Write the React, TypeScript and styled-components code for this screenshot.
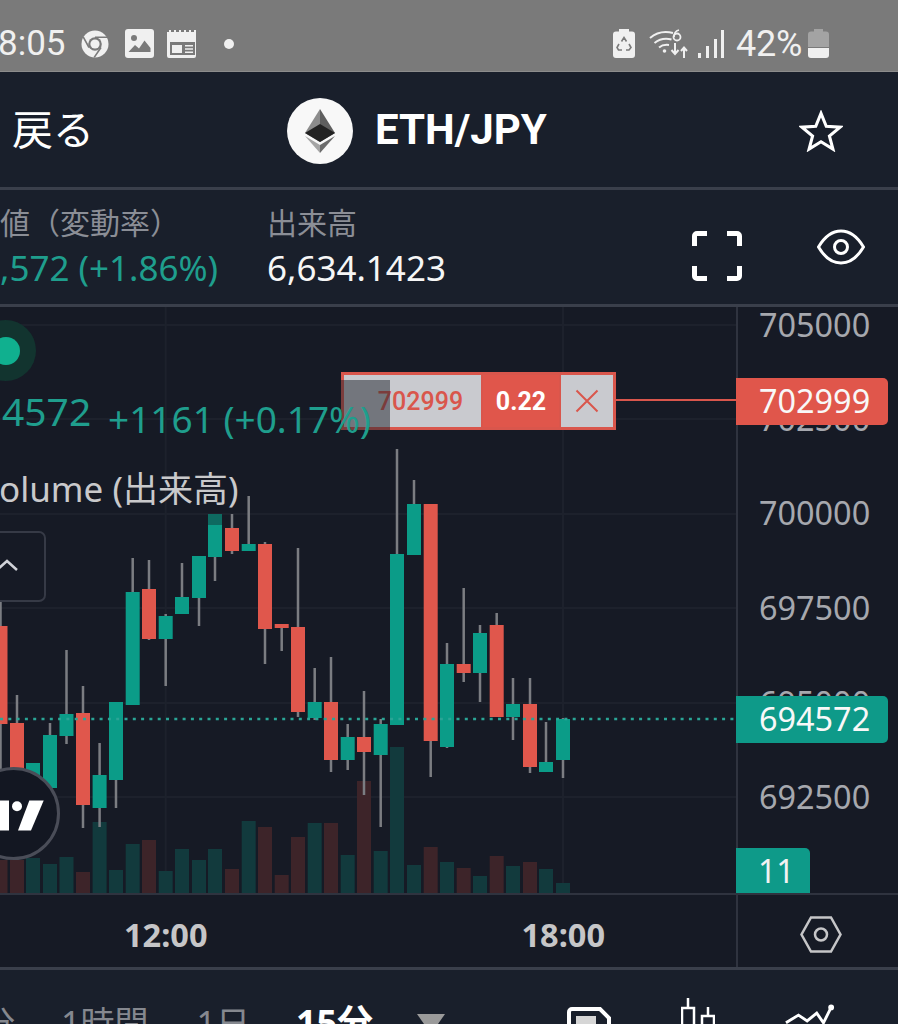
import styled, { createGlobalStyle } from "styled-components";

const GlobalStyle = createGlobalStyle`
  html, body {
    margin: 0;
    padding: 0;
    background: #191f2b;
  }
  * {
    box-sizing: border-box;
  }
`;

const Screen = styled.div`
  width: 898px;
  height: 1024px;
  overflow: hidden;
  display: flex;
  flex-direction: column;
  font-family: "Noto Sans", "Noto Sans CJK JP", sans-serif;
  color: #fff;
  background: #191f2b;
`;

const StatusBar = styled.div`
  height: 72px;
  flex: none;
  display: flex;
  align-items: center;
  background: #7a7a7a;
  border-bottom: 1px solid #8c8c8c;
  color: #f0f0f0;
  font-family: Roboto, sans-serif;
  font-size: 35px;
  padding-top: 16px;
`;

const Clock = styled.span`
  margin-left: -2px;
  width: 83px;
  flex: none;
`;

const StatusIcon = styled.svg<{ $gap: number }>`
  flex: none;
  margin-right: ${(p) => p.$gap}px;
  color: #f0f0f0;
`;

const NoticeDot = styled.div`
  width: 10px;
  height: 10px;
  flex: none;
  margin-left: 26px;
  border-radius: 50%;
  background: #f0f0f0;
`;

const Battery = styled.span`
  font-size: 36px;
  margin-right: 6px;
  letter-spacing: -0.3px;
`;

const Spacer = styled.div`
  flex: 1;
`;

const Header = styled.header`
  height: 118px;
  flex: none;
  position: relative;
  display: flex;
  align-items: center;
  padding: 0 55px 0 12px;
  border-bottom: 3px solid #3a3f4b;
`;

const BackLink = styled.div`
  font-size: 41px;
  width: 275px;
  line-height: 1;
`;

const Coin = styled.div`
  width: 66px;
  height: 66px;
  flex: none;
  border-radius: 50%;
  background: #f8f8f8;
  display: flex;
  align-items: center;
  justify-content: center;
  margin-top: 2px;
`;

const Pair = styled.div`
  font-family: Roboto, sans-serif;
  font-size: 42px;
  font-weight: 700;
  margin-left: 22px;
`;

const StarIcon = styled.svg`
  margin-top: 2px;
`;

const InfoRow = styled.div`
  height: 117px;
  flex: none;
  display: flex;
  border-bottom: 3px solid #3a3f4b;
  padding: 13px 33px 0 0;
`;

const Stat = styled.div<{ $width: number }>`
  width: ${(p) => p.$width}px;
  flex: none;
  white-space: nowrap;
`;

const StatLabel = styled.div`
  font-size: 30px;
  line-height: 40px;
  color: #8b8e96;
`;

const StatValue = styled.div<{ $up?: boolean }>`
  font-size: 35px;
  line-height: 46px;
  margin-top: 2px;
  color: ${(p) => (p.$up ? "#1f9e8d" : "#f6f6f6")};
`;

const InfoIcons = styled.div`
  display: flex;
  align-items: flex-start;
  gap: 75px;
  margin-left: auto;
  padding-top: 28px;
`;

const EyeIcon = styled.svg`
  margin-top: -2px;
`;

const ChartRow = styled.div`
  height: 588px;
  flex: none;
  display: flex;
  background: #161a25;
  border-bottom: 2px solid #2f333f;
`;

const Plot = styled.div`
  width: 736px;
  flex: none;
  position: relative;
  overflow: hidden;
`;

const ChartSvg = styled.svg`
  display: block;
  width: 737px;
  height: 586px;
`;

const Legend = styled.div`
  position: absolute;
  top: 13px;
  left: 0;
  z-index: 3;
  white-space: nowrap;
`;

const StatusHalo = styled.div`
  width: 61px;
  height: 61px;
  margin-left: -25px;
  border-radius: 50%;
  background: #12342f;
  display: flex;
  align-items: center;
  justify-content: center;
`;

const StatusDot = styled.div`
  width: 28px;
  height: 28px;
  border-radius: 50%;
  background: #10b08f;
`;

const LegendValues = styled.div`
  display: flex;
  align-items: flex-start;
  margin-top: 4px;
  color: #1f9e8d;
`;

const LastValue = styled.span`
  font-size: 39px;
  line-height: 52px;
  width: 108px;
  padding-left: 2px;
`;

const ChangeValue = styled.span`
  font-size: 37px;
  line-height: 46px;
  margin-top: 11px;
`;

const StudyName = styled.div`
  font-size: 35px;
  line-height: 46px;
  color: #c9c9cb;
  margin-top: 24px;
  margin-left: -1px;
`;

const Collapse = styled.div`
  width: 66px;
  height: 71px;
  margin: 19px 0 0 -20px;
  border: 2px solid #363a46;
  border-radius: 7px;
  background: #161a25;
  display: flex;
  align-items: center;
  justify-content: center;
  padding: 0 0 4px 0;
`;

const ChevronIcon = styled.svg`
  margin-left: -12px;
`;

const OrderLine = styled.div`
  position: absolute;
  top: 65px;
  left: 341px;
  right: 0;
  display: flex;
  align-items: center;
  z-index: 2;
  &::after {
    content: "";
    flex: 1;
    height: 2px;
    margin-bottom: 3px;
    background: #d9564c;
  }
`;

const OrderBox = styled.div`
  width: 275px;
  height: 58px;
  flex: none;
  position: relative;
  display: flex;
  gap: 2px;
  padding: 3px;
  background: #d9564c;
  font-family: Roboto, sans-serif;
  font-size: 25px;
  font-weight: 500;
`;

const OrderCell = styled.div<{ $width: number; $tone: "light" | "solid" }>`
  width: ${(p) => p.$width}px;
  flex: none;
  display: flex;
  align-items: center;
  justify-content: center;
  background: ${(p) => (p.$tone === "light" ? "#c9cacf" : "#e0564b")};
  color: ${(p) => (p.$tone === "light" ? "#d9564c" : "#fff")};
  font-weight: ${(p) => (p.$tone === "light" ? 500 : 700)};
`;

const PriceText = styled.span`
  padding-left: 16px;
`;

const OrderShade = styled.div`
  position: absolute;
  left: 0;
  top: 8px;
  bottom: 0;
  width: 49px;
  background: rgba(30, 33, 44, 0.5);
`;

const LogoBadge = styled.div`
  position: absolute;
  left: -33px;
  top: 460px;
  width: 93px;
  height: 93px;
  z-index: 3;
  border-radius: 50%;
  border: 3px solid #4a4d58;
  background: #131722;
  display: flex;
  align-items: center;
  justify-content: center;
`;

const PriceAxis = styled.div`
  width: 162px;
  flex: none;
  position: relative;
  border-left: 2px solid #2f333f;
`;

const PriceTick = styled.div<{ $top: number }>`
  position: absolute;
  top: ${(p) => p.$top}px;
  left: 21px;
  font-size: 32.4px;
  line-height: 36px;
  color: #a6a8ae;
`;

const PriceTag = styled.div<{ $top: number; $bg: string }>`
  position: absolute;
  top: ${(p) => p.$top}px;
  left: -2px;
  width: 152px;
  height: 47px;
  padding: 0 0 3px 23px;
  display: flex;
  align-items: center;
  font-size: 32.4px;
  color: #f8f8f8;
  background: ${(p) => p.$bg};
  border-radius: 0 5px 5px 0;
`;

const VolumeTag = styled.div`
  position: absolute;
  bottom: 0;
  left: -2px;
  width: 74px;
  height: 45px;
  padding-left: 22px;
  display: flex;
  align-items: center;
  font-size: 32px;
  color: #f2f2f2;
  background: #0e9a89;
  border-radius: 0 5px 0 0;
`;

const TimeRow = styled.div`
  height: 75px;
  flex: none;
  display: flex;
  background: #161a25;
  border-bottom: 3px solid #3a3f4b;
`;

const TimeAxis = styled.div`
  width: 736px;
  flex: none;
  display: flex;
  align-items: center;
  gap: 314px;
  padding: 6px 0 0 124px;
  font-size: 32.5px;
  font-weight: 700;
  color: #c6c6c8;
`;

const AxisSettings = styled.div`
  flex: 1;
  display: flex;
  align-items: center;
  justify-content: center;
  padding: 6px 0 0 6px;
  border-left: 2px solid #2f333f;
`;

const Toolbar = styled.div`
  flex: 1;
  min-height: 0;
  overflow: hidden;
  display: flex;
  align-items: flex-start;
  font-size: 34px;
  color: #85888f;
  white-space: nowrap;
`;

const Interval = styled.span<{ $left: number; $active?: boolean }>`
  margin-left: ${(p) => p.$left}px;
  line-height: 46px;
  margin-top: 30px;
  flex: none;
  font-size: ${(p) => (p.$active ? 36 : 34)}px;
  font-weight: ${(p) => (p.$active ? 700 : 400)};
  color: ${(p) => (p.$active ? "#fff" : "#85888f")};
`;

const Caret = styled.div`
  width: 0;
  height: 0;
  flex: none;
  margin: 44px 0 0 44px;
  border-left: 14px solid transparent;
  border-right: 14px solid transparent;
  border-top: 20px solid #9a9a9a;
`;

const ToolIcon = styled.svg<{ $left: number; $top: number }>`
  flex: none;
  margin-left: ${(p) => p.$left}px;
  margin-top: ${(p) => p.$top}px;
`;

type Candle = [number, number, number, number, number, 0 | 1, number];

// x, body top, body bottom, wick top, wick bottom, rising, volume top
const candles: Candle[] = [
  [0.5, 626, 724, 590, 770, 0, 860],
  [17, 723, 772, 695, 772, 0, 860],
  [33, 763, 790, 763, 790, 1, 858],
  [50, 735, 788, 723, 788, 1, 864],
  [66.5, 714, 736, 650, 744, 1, 857],
  [83, 713, 805, 686, 828, 0, 872],
  [99.6, 775, 808, 743, 827, 1, 822],
  [116, 702, 780, 702, 808, 1, 870],
  [132.7, 592, 705, 558, 705, 1, 844],
  [149, 589, 639, 560, 640, 0, 840],
  [165.7, 616, 639, 614, 686, 1, 871],
  [182, 597, 614, 563, 614, 1, 849],
  [199, 556, 598, 556, 626, 1, 860],
  [215, 514, 557, 514, 581, 1, 849],
  [232, 528, 551, 514, 554, 0, 869],
  [248.7, 544, 551, 496, 551, 1, 821],
  [265, 544, 629, 542, 664, 0, 827],
  [281.7, 624, 628, 624, 651, 0, 875],
  [298, 627, 712, 548, 717, 0, 837],
  [314.7, 702, 718, 668, 720, 1, 823],
  [331, 702, 760, 657, 772, 0, 823],
  [347.7, 737, 760, 724, 770, 1, 855],
  [364, 737, 752, 691, 795, 0, 781],
  [380.7, 724, 755, 719, 827, 1, 851],
  [397, 554, 725, 449, 725, 1, 747],
  [414, 504, 555, 480, 555, 1, 865],
  [430.7, 504, 741, 504, 777, 0, 847],
  [447, 664, 747, 643, 748, 1, 862],
  [463.7, 664, 673, 588, 682, 0, 868],
  [480, 633, 673, 625, 702, 1, 876],
  [496.7, 625, 717, 613, 717, 0, 856],
  [513, 704, 717, 678, 740, 1, 866],
  [530, 704, 767, 678, 773, 0, 862],
  [546, 762, 772, 722, 772, 1, 869],
  [563, 719, 760, 718, 778, 1, 883],
];

const gridRows = [325, 419, 514, 608, 703, 797];
const gridColumns = [165.7, 563];

function Chart() {
  return (
    <ChartSvg viewBox="0 307 737 586">
      {gridRows.map((y) => (
        <line key={y} x1="0" x2="737" y1={y} y2={y} stroke="#1d212c" strokeWidth="2" />
      ))}
      {gridColumns.map((x) => (
        <line key={x} x1={x} x2={x} y1="307" y2="893" stroke="#1d212c" strokeWidth="2" />
      ))}
      {candles.map(([x, , , , , up, vol]) => (
        <rect key={x} x={x - 7} y={vol} width="14" height={893 - vol} fill={up ? "#123a3d" : "#3d2429"} />
      ))}
      {candles.map(([x, top, bottom, wickTop, wickBottom, up]) => (
        <g key={x}>
          <rect x={x - 1.25} y={wickTop} width="2.5" height={wickBottom - wickTop} fill="#7b7d82" />
          <rect x={x - 7} y={top} width="14" height={bottom - top} fill={up ? "#0b9c88" : "#e0574c"} />
        </g>
      ))}
      <rect x="208" y="514" width="14" height="11" fill="#0e6a61" />
      <line x1="0" x2="737" y1="719" y2="719" stroke="#2aa596" strokeWidth="2.5" strokeDasharray="3 5.3" />
    </ChartSvg>
  );
}

export default function App() {
  return (
    <Screen>
      <GlobalStyle />
      <StatusBar>
        <Clock>8:05</Clock>
        <StatusIcon $gap={16} width="28" height="28" viewBox="0 0 28 28">
          <circle cx="14" cy="14" r="13.5" fill="currentColor" />
          <circle cx="14" cy="14" r="6.8" fill="#7a7a7a" />
          <circle cx="14" cy="14" r="4.6" fill="currentColor" />
          <path d="M14 7.2h12.4M8 17.5 2.2 6.8M20 17.5 13.2 27.4" stroke="#7a7a7a" strokeWidth="1.6" fill="none" />
        </StatusIcon>
        <StatusIcon $gap={13} width="29" height="29" viewBox="0 0 29 29">
          <rect width="29" height="29" rx="3" fill="currentColor" />
          <circle cx="9" cy="9" r="3" fill="#7a7a7a" />
          <path d="M3.5 23 10 16l4 3.5 5.5-8L25.5 19v4z" fill="#7a7a7a" />
        </StatusIcon>
        <StatusIcon $gap={0} width="31" height="28" viewBox="0 0 31 28">
          <path d="M0 2h2V0h2v2h3V0h2v2h3V0h2v2h3V0h2v2h3V0h2v2h3V0h2v26a2 2 0 0 1-2 2H2a2 2 0 0 1-2-2z" fill="currentColor" />
          <path d="M3 9h25v16H3z" fill="#7a7a7a" />
          <path d="M3 12h25V9H3zM5 15h10v8H5zM18 15h8v1.6h-8zM18 18.2h8v1.6h-8zM18 21.4h8V23h-8z" fill="currentColor" />
        </StatusIcon>
        <NoticeDot />
        <Spacer />
        <StatusIcon $gap={14} width="22" height="29" viewBox="0 0 22 29">
          <path d="M6 0h10v2.5h3a3 3 0 0 1 3 3V26a3 3 0 0 1-3 3H3a3 3 0 0 1-3-3V5.500a3 3 0 0 1 3-3h3z" fill="currentColor" />
          <path d="M8.500 12.500 11 8.500l2.500 4M16 15l2 3.500-2 2.500h-3M9 21H5.500L4 18.500 6 15" stroke="#7a7a7a" strokeWidth="1.6" fill="none" />
        </StatusIcon>
        <StatusIcon $gap={8} width="40" height="30" viewBox="0 0 40 30">
          <path d="M1 9C8 3 16 2 24 4M5.500 14c5-4 11-5 17-3.500M10 18.500c3-2.500 6-3 10-2.500" stroke="currentColor" strokeWidth="2" fill="none" />
          <circle cx="15.500" cy="22" r="1.800" fill="currentColor" />
          <path d="M26 24.500V14M22.500 21l3.500 4 3.500-4M35 29V19M32 22l3-3.500 3 3.500" stroke="currentColor" strokeWidth="2" fill="none" />
          <circle cx="28" cy="8" r="3.500" stroke="currentColor" strokeWidth="1.800" fill="none" />
          <path d="M25 8c0-3 1-6 5-7" stroke="currentColor" strokeWidth="1.800" fill="none" />
        </StatusIcon>
        <StatusIcon $gap={12} width="27" height="28" viewBox="0 0 27 28">
          <path d="M1 23h3v5H1zM9 16h3v12H9zM17 9h3v19h-3zM24 0h3v28h-3z" fill="currentColor" />
        </StatusIcon>
        <Battery>42%</Battery>
        <StatusIcon $gap={69} width="21" height="29" viewBox="0 0 21 29">
          <path d="M6 0h9v2.500h3a3 3 0 0 1 3 3V18H0V5.500a3 3 0 0 1 3-3h3z" fill="#a3a3a3" />
          <path d="M0 19h21v7a3 3 0 0 1-3 3H3a3 3 0 0 1-3-3z" fill="currentColor" />
        </StatusIcon>
      </StatusBar>

      <Header>
        <BackLink>戻る</BackLink>
        <Coin>
          <svg width="30" height="44" viewBox="0 0 30 44">
            <path d="M15 0 0 24l15 9z" fill="#8c8c8c" />
            <path d="M15 0 30 24l-15 9z" fill="#5f5f5f" />
            <path d="M15 15 0 24l15 9 15-9z" fill="#222" />
            <path d="M0 27l15 17V36z" fill="#a5a5a5" />
            <path d="M30 27 15 44V36z" fill="#6c6c6c" />
          </svg>
        </Coin>
        <Pair>ETH/JPY</Pair>
        <Spacer />
        <StarIcon width="44" height="42" viewBox="0 0 46 44">
          <path d="M23 3.500 28.500 17 43 18l-11.200 9.200L35.500 41 23 33.300 10.500 41l3.700-13.800L3 18l14.500-1z" fill="none" stroke="#fff" strokeWidth="3.200" />
        </StarIcon>
      </Header>

      <InfoRow>
        <Stat $width={267}>
          <StatLabel>値（変動率）</StatLabel>
          <StatValue $up>,572 (+1.86%)</StatValue>
        </Stat>
        <Stat $width={200}>
          <StatLabel>出来高</StatLabel>
          <StatValue>6,634.1423</StatValue>
        </Stat>
        <InfoIcons>
          <svg width="50" height="50" viewBox="0 0 50 50">
            <path d="M2.500 15V5a2.500 2.500 0 0 1 2.500-2.500h10M35 2.500h10A2.500 2.500 0 0 1 47.500 5v10M47.500 35v10a2.500 2.500 0 0 1-2.500 2.500H35M15 47.500H5A2.500 2.500 0 0 1 2.500 45V35" fill="none" stroke="#fff" strokeWidth="5" />
          </svg>
          <EyeIcon width="48" height="36" viewBox="0 0 48 36">
            <path d="M1.500 18C8 7 15 2 24 2s16 5 22.500 16C40 29 33 34 24 34S8 29 1.500 18z" fill="none" stroke="#fff" strokeWidth="3" />
            <circle cx="24" cy="18" r="6.500" fill="none" stroke="#fff" strokeWidth="3" />
          </EyeIcon>
        </InfoIcons>
      </InfoRow>

      <ChartRow>
        <Plot>
          <Chart />
          <Legend>
            <StatusHalo>
              <StatusDot />
            </StatusHalo>
            <LegendValues>
              <LastValue>4572</LastValue>
              <ChangeValue>+1161 (+0.17%)</ChangeValue>
            </LegendValues>
            <StudyName>olume (出来高)</StudyName>
            <Collapse>
              <ChevronIcon width="24" height="14" viewBox="0 0 24 14">
                <path d="M2 12 12 3l10 9" fill="none" stroke="#d0d2d8" strokeWidth="2.500" />
              </ChevronIcon>
            </Collapse>
          </Legend>
          <OrderLine>
            <OrderBox>
              <OrderCell $width={137} $tone="light">
                <PriceText>702999</PriceText>
              </OrderCell>
              <OrderCell $width={76} $tone="solid">0.22</OrderCell>
              <OrderCell $width={52} $tone="light">
                <svg width="24" height="24" viewBox="0 0 24 24">
                  <path d="M1.500 1.500l21 21M22.500 1.500l-21 21" stroke="#d9564c" strokeWidth="2" />
                </svg>
              </OrderCell>
              <OrderShade />
            </OrderBox>
          </OrderLine>
          <LogoBadge>
            <svg width="66" height="36" viewBox="0 0 66 36">
              <path d="M0 4.500h28v30H0z" fill="#fff" />
              <circle cx="36" cy="10.200" r="5" fill="#fff" />
              <path d="M48.300 4.500h14.400L50 34.500H37z" fill="#fff" />
            </svg>
          </LogoBadge>
        </Plot>
        <PriceAxis>
          <PriceTick $top={-1}>705000</PriceTick>
          <PriceTick $top={93}>702500</PriceTick>
          <PriceTick $top={187}>700000</PriceTick>
          <PriceTick $top={282}>697500</PriceTick>
          <PriceTick $top={377}>695000</PriceTick>
          <PriceTick $top={471}>692500</PriceTick>
          <PriceTag $top={71} $bg="#e0564b">702999</PriceTag>
          <PriceTag $top={389} $bg="#0e9a89">694572</PriceTag>
          <VolumeTag>11</VolumeTag>
        </PriceAxis>
      </ChartRow>

      <TimeRow>
        <TimeAxis>
          <span>12:00</span>
          <span>18:00</span>
        </TimeAxis>
        <AxisSettings>
          <svg width="42" height="37" viewBox="0 0 42 37">
            <path d="M11 1.500h20L40.500 18.500 31 35.500H11L1.500 18.500z" fill="none" stroke="#c6c6c8" strokeWidth="2.500" />
            <circle cx="21" cy="18.500" r="6" fill="none" stroke="#c6c6c8" strokeWidth="2.500" />
          </svg>
        </AxisSettings>
      </TimeRow>

      <Toolbar>
        <Interval $left={-19}>分</Interval>
        <Interval $left={46}>1時間</Interval>
        <Interval $left={48}>1日</Interval>
        <Interval $left={46} $active>15分</Interval>
        <Caret />
        <ToolIcon $left={122} $top={37} width="44" height="30" viewBox="0 0 44 30">
          <path d="M2 30V5a3 3 0 0 1 3-3h28l9 9v19z" fill="none" stroke="#fff" strokeWidth="4" />
          <path d="M9 9h20v9H9z" fill="#d6d6d6" />
        </ToolIcon>
        <ToolIcon $left={70} $top={28} width="34" height="30" viewBox="0 0 34 30">
          <path d="M7 0v10M1 30V10h12v20M27 9v9M21 30V18h12v12" fill="none" stroke="#fff" strokeWidth="2.500" />
        </ToolIcon>
        <ToolIcon $left={70} $top={33} width="50" height="30" viewBox="0 0 52 30">
          <path d="M1 20 14 12l9 6 10-8 7 10 8-16" fill="none" stroke="#fff" strokeWidth="3" />
          <circle cx="48" cy="4" r="3" fill="#fff" />
          <path d="M14 22v8M33 22v8M46 22v8" stroke="#fff" strokeWidth="4" />
        </ToolIcon>
      </Toolbar>
    </Screen>
  );
}
